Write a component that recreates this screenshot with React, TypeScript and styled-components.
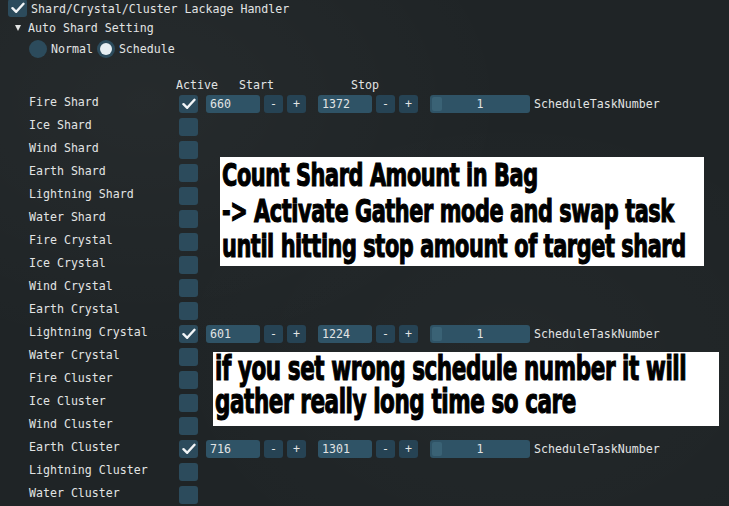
import styled, { createGlobalStyle } from "styled-components";

const Global = createGlobalStyle`
  html, body {
    margin: 0;
    padding: 0;
    width: 729px;
    height: 506px;
    overflow: hidden;
    background: #1f2426;
  }
  body {
    font-family: "DejaVu Sans Mono", "Liberation Mono", monospace;
    font-size: 11.6px;
    color: #e2e4e4;
  }
`;

const Window = styled.div`
  position: relative;
  width: 729px;
  height: 506px;
  overflow: hidden;
  background:
    radial-gradient(ellipse at 20% 20%, rgba(255, 255, 255, 0.03), transparent 45%),
    radial-gradient(ellipse at 70% 70%, rgba(255, 255, 255, 0.02), transparent 50%),
    #1f2426;
`;

const TopRow = styled.div`
  display: flex;
  align-items: center;
  gap: 4px;
  height: 17px;
  padding-left: 8px;
`;

const Box = styled.div<{ $size?: number }>`
  width: ${(p) => p.$size ?? 19}px;
  height: 18px;
  border-radius: 3px;
  background: #2c4b5c;
  display: flex;
  align-items: center;
  justify-content: center;
  flex-shrink: 0;
`;

const TreeRow = styled.div`
  display: flex;
  align-items: center;
  height: 22px;
  padding-left: 15px;
  gap: 7px;
`;

const Arrow = styled.span`
  width: 0;
  height: 0;
  border-left: 3.5px solid transparent;
  border-right: 3.5px solid transparent;
  border-top: 6px solid #e2e4e4;
`;

const RadioRow = styled.div`
  display: flex;
  align-items: center;
  height: 19px;
  padding-left: 29px;
`;

const Radio = styled.span<{ $on?: boolean }>`
  width: 18px;
  height: 18px;
  border-radius: 50%;
  background: #2c4b5c;
  display: flex;
  align-items: center;
  justify-content: center;
  margin-right: 4px;
  &::after {
    content: "";
    display: ${(p) => (p.$on ? "block" : "none")};
    width: 12px;
    height: 12px;
    border-radius: 50%;
    background: #e6eef2;
  }
`;

const RadioLabel = styled.span`
  margin-right: 4px;
`;

const Header = styled.div`
  display: flex;
  height: 35px;
  align-items: flex-end;
  padding-bottom: 2px;
  box-sizing: border-box;
  padding-left: 176px;
`;

const HeadCell = styled.span<{ $w: number }>`
  width: ${(p) => p.$w}px;
  line-height: 12px;
`;

const Row = styled.div`
  display: flex;
  align-items: flex-start;
  height: 23px;
  padding-top: 2px;
  box-sizing: border-box;
`;

const Label = styled.span`
  width: 150px;
  padding-left: 29px;
  line-height: 14px;
  flex-shrink: 0;
`;

const Field = styled.div`
  width: 54px;
  height: 18px;
  border-radius: 3px;
  background: #2f5366;
  margin-left: 8px;
  padding-left: 4px;
  box-sizing: border-box;
  line-height: 18px;
`;

const Step = styled.div`
  width: 19px;
  height: 18px;
  border-radius: 3px;
  background: #264354;
  margin-left: 4px;
  text-align: center;
  line-height: 18px;
`;

const Gap = styled.span<{ $w: number }>`
  width: ${(p) => p.$w}px;
`;

const Slider = styled.div`
  position: relative;
  width: 100px;
  height: 18px;
  border-radius: 3px;
  background: #2f5366;
  text-align: center;
  line-height: 18px;
  margin-left: 12px;
`;

const Grab = styled.span`
  position: absolute;
  left: 2px;
  top: 2px;
  width: 10px;
  height: 14px;
  border-radius: 2px;
  background: #3a6275;
`;

const SliderLabel = styled.span`
  margin-left: 4px;
  line-height: 18px;
`;

const Note = styled.div<{ $left: number; $top: number; $w: number; $h: number }>`
  position: absolute;
  left: ${(p) => p.$left}px;
  top: ${(p) => p.$top}px;
  width: ${(p) => p.$w}px;
  height: ${(p) => p.$h}px;
  background: #ffffff;
  color: #000;
  padding-left: 2px;
  box-sizing: border-box;
  font-family: "DejaVu Sans", "Liberation Sans", sans-serif;
  font-weight: 700;
  font-stretch: condensed;
`;

const NoteLine = styled.div<{ $lh: number; $size: number; $sx: number }>`
  font-size: ${(p) => p.$size}px;
  line-height: ${(p) => p.$lh}px;
  white-space: nowrap;
  transform: scaleX(${(p) => p.$sx});
  transform-origin: left center;
  letter-spacing: -0.6px;
  -webkit-text-stroke: 1.1px #000;
`;

const Check = () => (
  <svg width="14" height="12" viewBox="0 0 14 12">
    <path d="M1.5 6.2 L5.2 9.8 L12.5 1.8" fill="none" stroke="#f2f5f7" strokeWidth="2.4" strokeLinecap="round" strokeLinejoin="round" />
  </svg>
);

type Item = { name: string; start?: number; stop?: number };

const items: Item[] = [
  { name: "Fire Shard", start: 660, stop: 1372 },
  { name: "Ice Shard" },
  { name: "Wind Shard" },
  { name: "Earth Shard" },
  { name: "Lightning Shard" },
  { name: "Water Shard" },
  { name: "Fire Crystal" },
  { name: "Ice Crystal" },
  { name: "Wind Crystal" },
  { name: "Earth Crystal" },
  { name: "Lightning Crystal", start: 601, stop: 1224 },
  { name: "Water Crystal" },
  { name: "Fire Cluster" },
  { name: "Ice Cluster" },
  { name: "Wind Cluster" },
  { name: "Earth Cluster", start: 716, stop: 1301 },
  { name: "Lightning Cluster" },
  { name: "Water Cluster" },
];

export default function App() {
  return (
    <Window>
      <Global />
      <TopRow>
        <Box style={{ marginTop: -2 }}>
          <Check />
        </Box>
        <span>Shard/Crystal/Cluster Lackage Handler</span>
      </TopRow>
      <TreeRow>
        <Arrow />
        <span>Auto Shard Setting</span>
      </TreeRow>
      <RadioRow>
        <Radio />
        <RadioLabel>Normal</RadioLabel>
        <Radio $on />
        <RadioLabel>Schedule</RadioLabel>
      </RadioRow>
      <Header>
        <HeadCell $w={63}>Active</HeadCell>
        <HeadCell $w={112}>Start</HeadCell>
        <HeadCell $w={40}>Stop</HeadCell>
      </Header>
      {items.map((it) => (
        <Row key={it.name}>
          <Label>{it.name}</Label>
          <Box>{it.start !== undefined && <Check />}</Box>
          {it.start !== undefined && (
            <>
              <Field>{it.start}</Field>
              <Step>-</Step>
              <Step>+</Step>
              <Gap $w={4} />
              <Field>{it.stop}</Field>
              <Step>-</Step>
              <Step>+</Step>
              <Slider>
                <Grab />
                1
              </Slider>
              <SliderLabel>ScheduleTaskNumber</SliderLabel>
            </>
          )}
        </Row>
      ))}
      <Note $left={220} $top={157} $w={484} $h={109}>
        <NoteLine $size={32} $sx={0.725} $lh={36}>Count Shard Amount in Bag</NoteLine>
        <NoteLine $size={32} $sx={0.725} $lh={36}>-&gt; Activate Gather mode and swap task</NoteLine>
        <NoteLine $size={32} $sx={0.725} $lh={34}>until hitting stop amount of target shard</NoteLine>
      </Note>
      <Note $left={213} $top={352} $w={506} $h={74}>
        <NoteLine $size={33} $sx={0.725} $lh={33}>if you set wrong schedule number it will</NoteLine>
        <NoteLine $size={33} $sx={0.725} $lh={33}>gather really long time so care</NoteLine>
      </Note>
    </Window>
  );
}
